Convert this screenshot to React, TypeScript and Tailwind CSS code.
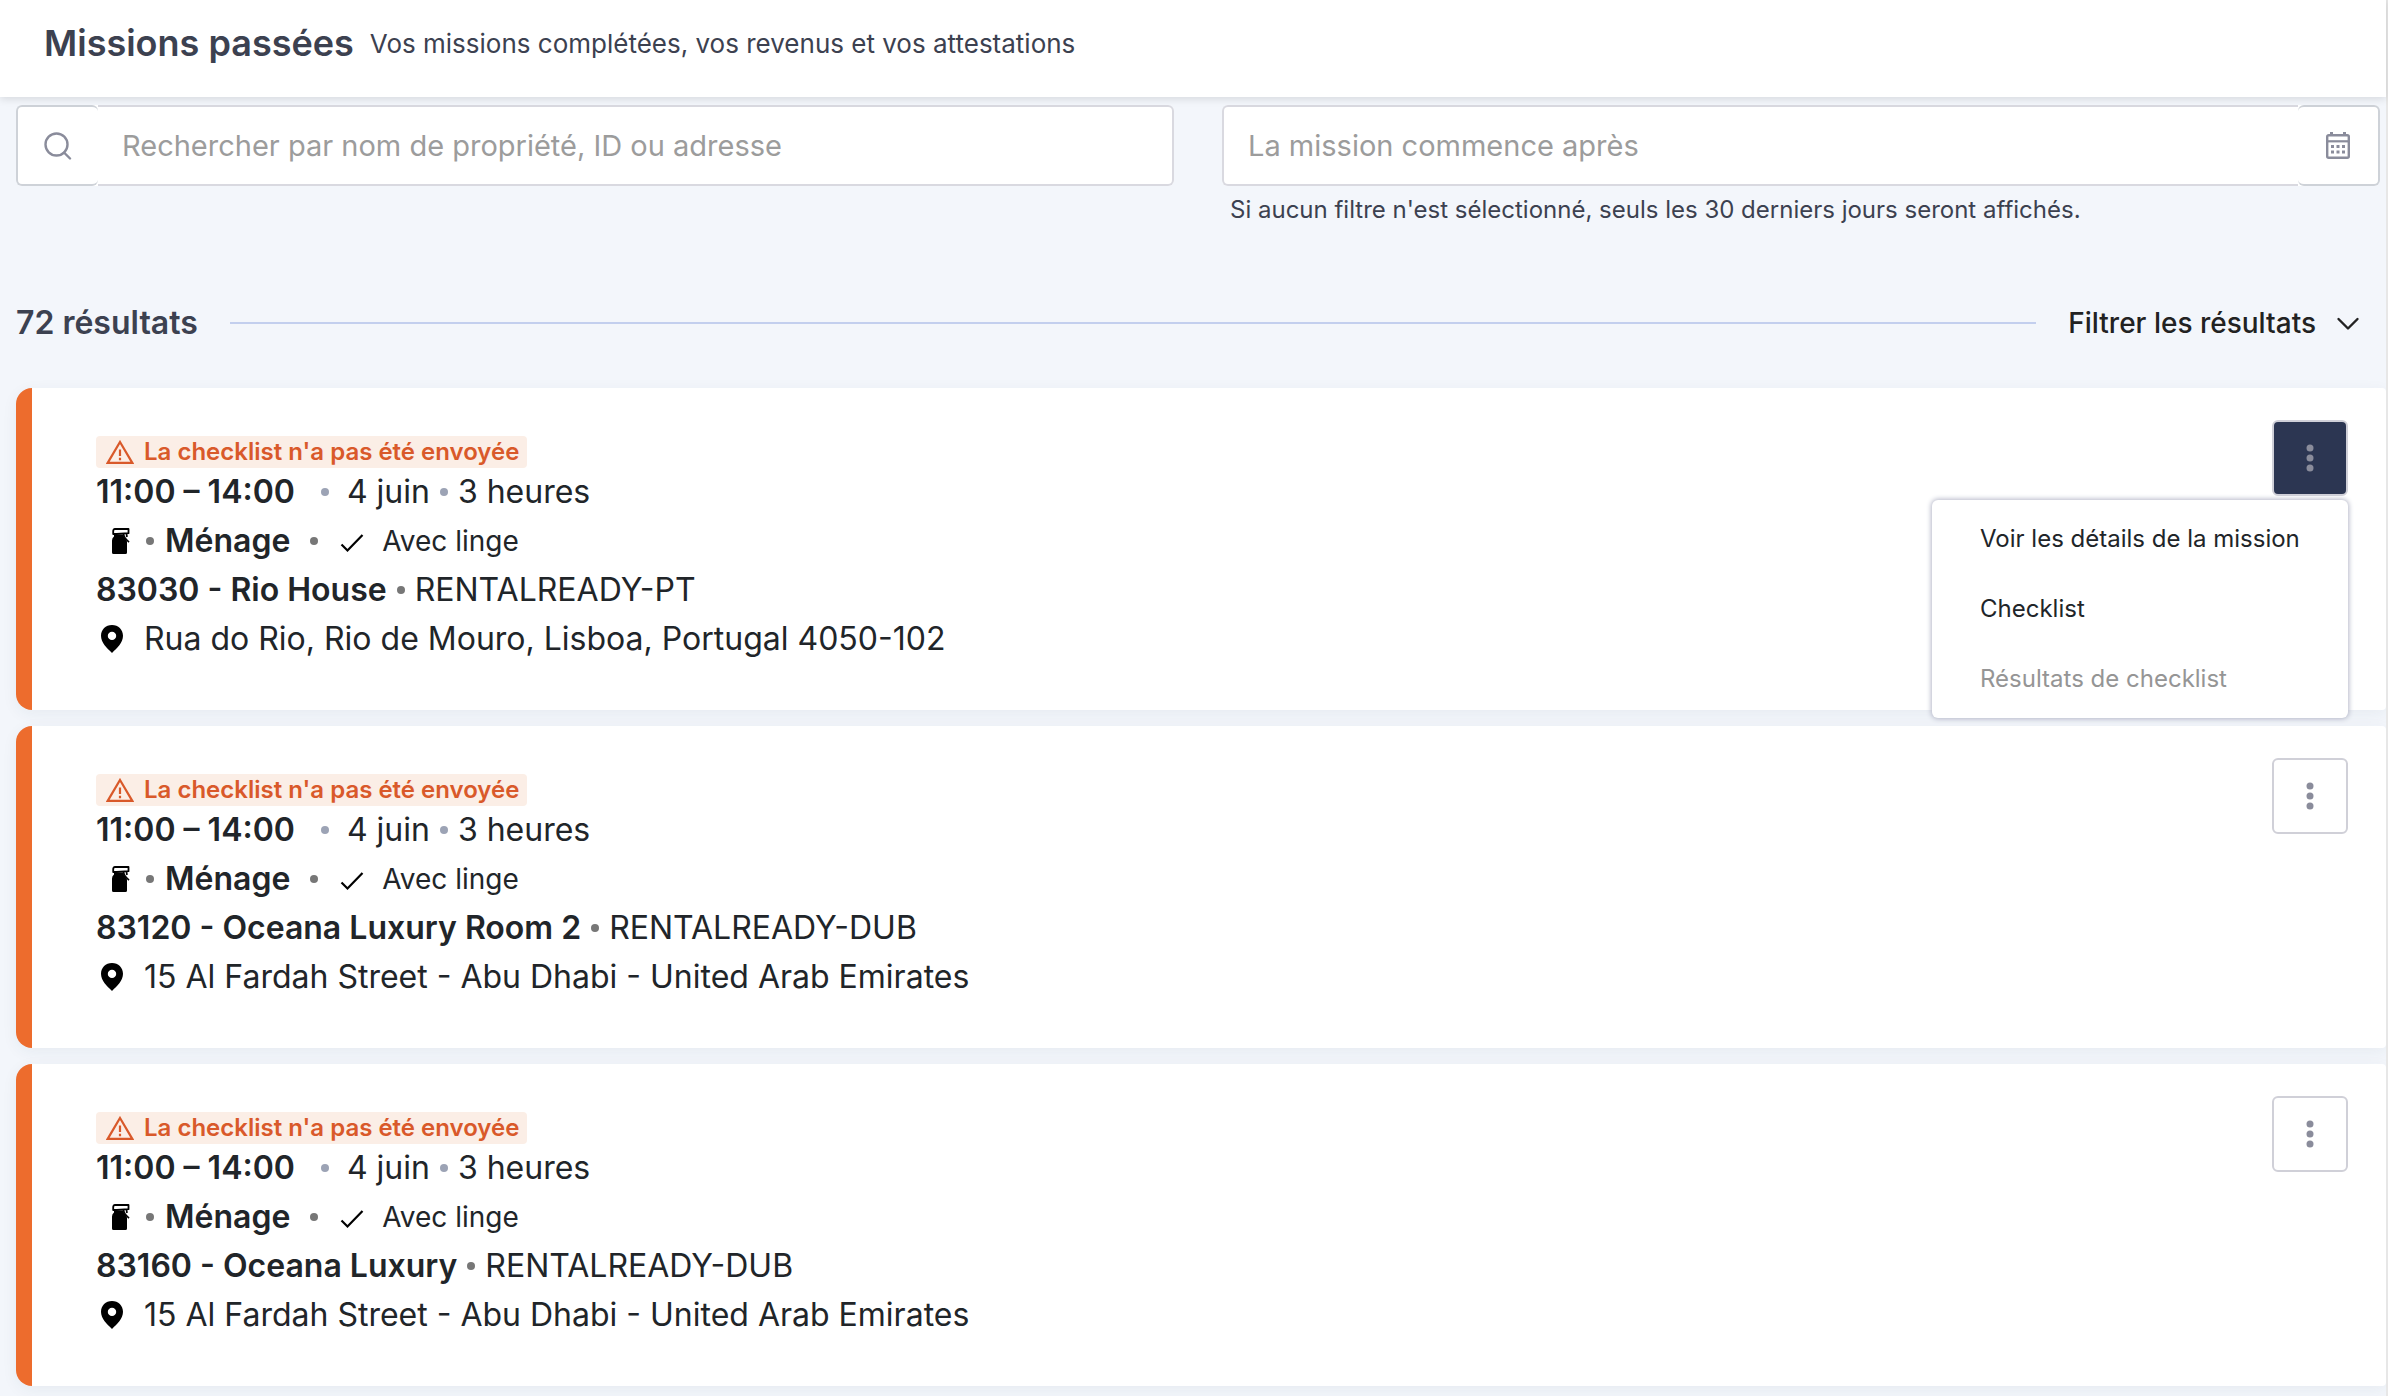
import React, { useState } from "react";

type Mission = {
  id: number;
  name: string;
  agency: string;
  address: string;
};

const missions: Mission[] = [
  {
    id: 83030,
    name: "Rio House",
    agency: "RENTALREADY-PT",
    address: "Rua do Rio, Rio de Mouro, Lisboa, Portugal 4050-102",
  },
  {
    id: 83120,
    name: "Oceana Luxury Room 2",
    agency: "RENTALREADY-DUB",
    address: "15 Al Fardah Street - Abu Dhabi - United Arab Emirates",
  },
  {
    id: 83160,
    name: "Oceana Luxury",
    agency: "RENTALREADY-DUB",
    address: "15 Al Fardah Street - Abu Dhabi - United Arab Emirates",
  },
];

// Icons
const SearchIcon = () => (
  <svg className="w-7 h-7" viewBox="0 0 28 28" fill="none" stroke="#8a8c9b" strokeWidth="2.4">
    <circle cx="12.5" cy="12.5" r="11" />
    <path d="M20 20.5l6 6" strokeLinecap="round" />
  </svg>
);

const CalendarIcon = () => (
  <svg className="w-6 h-7" viewBox="0 0 24 28">
    <path d="M4 0h3v4H4zM17 0h3v4h-3z" fill="#8a8c9b" />
    <rect x="1.2" y="3.2" width="21.6" height="22.6" rx="1.5" fill="none" stroke="#8a8c9b" strokeWidth="2.4" />
    <path d="M1 9.3h22" stroke="#8a8c9b" strokeWidth="2.2" />
    <path
      d="M5 13h3v3H5zM10.5 13h3v3h-3zM16 13h3v3h-3zM5 18.500h3v3H5zM10.5 18.500h3v3h-3zM16 18.500h3v3h-3z"
      fill="#8a8c9b"
    />
  </svg>
);

const ChevronIcon = () => (
  <svg className="w-6 h-6" viewBox="0 0 24 24" fill="none" stroke="#222" strokeWidth="2.4">
    <path d="M2.500 8l9.500 9.500L21.500 8" strokeLinecap="round" strokeLinejoin="round" />
  </svg>
);

const WarningIcon = () => (
  <svg className="w-7 h-6" viewBox="0 0 28 24" fill="none" stroke="#d9592a" strokeWidth="2.2">
    <path d="M14 2L26.300 22.900H1.700z" />
    <path d="M14 9.500v6.500M14 17.800v2.400" />
  </svg>
);

const SprayIcon = () => (
  <svg className="w-[18px] h-[26px]" viewBox="0 0 18 26">
    <path
      d="M3 1h13.500v4.200L4.500 6 1.200 6V3Q1.200 1 3 1z"
      fill="none"
      stroke="#000"
      strokeWidth="1.800"
      strokeLinejoin="round"
    />
    <path d="M2 6.500h9.500c.200 2 .800 3 2 4.200 1 1 1.500 2 1.500 3.500v10.300q0 1.500-1.500 1.500h-12Q0 26 0 24.500V12.500q0-2.500 2-4z" />
    <path d="M11.500 6c.500 3.500 2.500 5.500 5.500 8.200M14.500 6l.5 3" fill="none" stroke="#000" strokeWidth="1.700" />
  </svg>
);

const CheckIcon = () => (
  <svg className="w-6 h-6" viewBox="0 0 24 24" fill="none" stroke="#000" strokeWidth="2.2">
    <path d="M1.500 15.500l6 6L22.500 6" />
  </svg>
);

const PinIcon = () => (
  <svg className="w-6 h-7" viewBox="0 0 24 28">
    <path
      fillRule="evenodd"
      d="M12 0C5.600 0 1 4.700 1 10.800 1 18 7 23 12 28c5-5 11-10 11-17.200C23 4.700 18.400 0 12 0zm0 6.700a4.200 4.200 0 1 1 0 8.400 4.200 4.200 0 0 1 0-8.400z"
    />
  </svg>
);

const DotsIcon = () => (
  <svg className="w-2 h-7" viewBox="0 0 8 28" fill="#8a8c9b">
    <circle cx="4" cy="4" r="3.500" />
    <circle cx="4" cy="14" r="3.500" />
    <circle cx="4" cy="24" r="3.500" />
  </svg>
);

const Bullet = ({ className }: { className: string }) => (
  <span className={`w-2 h-2 rounded-full shrink-0 ${className}`} />
);

const MissionMenu = () => (
  <div
    role="menu"
    className="absolute right-0 top-20 z-20 w-[416px] py-1 bg-white rounded-md shadow-[0_0_5px_1px_#b5b7c8] text-[24px] text-[#212529]"
  >
    <button role="menuitem" className="block w-full h-[70px] pl-12 text-left">
      Voir les détails de la mission
    </button>
    <button role="menuitem" className="block w-full h-[70px] pl-12 text-left">
      Checklist
    </button>
    <button role="menuitem" disabled className="block w-full h-[70px] pl-12 text-left text-[#959595]">
      Résultats de checklist
    </button>
  </div>
);

type CardProps = {
  mission: Mission;
  isOpen: boolean;
  onToggle: () => void;
};

const MissionCard: React.FC<CardProps> = ({ mission, isOpen, onToggle }) => {
  return (
    <article className="flex justify-between items-start pl-16 pr-[38px] pt-8 pb-[47px] bg-white border-l-16 border-[#ed6c2d] rounded-l-2xl rounded-r-sm shadow-[0_4px_16px_rgba(40,60,90,0.06)]">
      <div className="pt-4 flex flex-col items-start gap-px text-[32px] leading-[48px] text-[#212529]">
        <div className="-mb-px h-8 pl-[10px] pr-2 flex items-center gap-[10px] rounded-sm bg-[#fbeee6] text-[24px] font-semibold text-[#d9592a]">
          <WarningIcon />
          La checklist n'a pas été envoyée
        </div>
        <div className="flex items-center">
          <span className="font-semibold">11:00 – 14:00</span>
          <Bullet className="ml-[26px] mr-[18px] bg-[#9ca3b5]" />
          <span>4 juin</span>
          <Bullet className="mx-[10px] bg-[#9ca3b5]" />
          <span>3 heures</span>
        </div>
        <div className="flex items-center pl-4">
          <SprayIcon />
          <Bullet className="ml-4 mr-[11px] bg-[#777]" />
          <span className="font-semibold">Ménage</span>
          <Bullet className="ml-5 mr-[22px] bg-[#777]" />
          <CheckIcon />
          <span className="ml-[18px] text-[28px]">Avec linge</span>
        </div>
        <div className="flex items-center">
          <span className="font-semibold">
            {mission.id} - {mission.name}
          </span>
          <Bullet className="mx-[10px] bg-[#777]" />
          <span>{mission.agency}</span>
        </div>
        <div className="flex items-center gap-5 pl-1">
          <PinIcon />
          <span>{mission.address}</span>
        </div>
      </div>
      <div className="relative">
        <button
          aria-label="Actions"
          aria-expanded={isOpen}
          onClick={onToggle}
          className={`w-[76px] h-[76px] flex justify-center items-center border-2 border-[#d0d0d8] rounded-md ${
            isOpen ? "bg-[#2c3652]" : "bg-white"
          }`}
        >
          <DotsIcon />
        </button>
        {isOpen && <MissionMenu />}
      </div>
    </article>
  );
};

export default function App() {
  // States
  const [search, setSearch] = useState("");
  const [startDate, setStartDate] = useState("");
  const [openId, setOpenId] = useState<number | null>(83030);

  return (
    <div className="min-h-screen bg-[#f3f6fb] border-r-2 border-[#e7e7e7] font-['Inter',sans-serif] text-[#3c4150]">
      <header className="relative z-10 h-[97px] pl-11 pb-[11px] flex items-center gap-4 bg-white shadow-[0_2px_8px_rgba(0,0,0,0.12)]">
        <h1 className="text-[36px] font-semibold">Missions passées</h1>
        <p className="text-[26px]">Vos missions complétées, vos revenus et vos attestations</p>
      </header>
      <main className="pt-2 pl-4 overflow-x-clip">
        <div className="grid grid-cols-2 gap-12 items-start pr-[6px]">
          <div className="flex h-[81px] bg-white rounded-md">
            <button
              aria-label="Rechercher"
              className="w-[82px] shrink-0 flex justify-center items-center border-2 border-r-0 border-[#ced2d8] rounded-md"
            >
              <SearchIcon />
            </button>
            <input
              type="text"
              aria-label="Rechercher une mission"
              placeholder="Rechercher par nom de propriété, ID ou adresse"
              value={search}
              onChange={(e) => setSearch(e.target.value)}
              className="flex-1 min-w-0 pl-6 text-[29px] border-2 border-l-0 border-[#d9d9e0] rounded-r-md outline-none placeholder:text-[#9c9c9c]"
            />
          </div>
          <div>
            <div className="flex h-[81px] bg-white rounded-md">
              <input
                type="text"
                id="start-date"
                aria-label="La mission commence après"
                placeholder="La mission commence après"
                value={startDate}
                onChange={(e) => setStartDate(e.target.value)}
                className="flex-1 min-w-0 pl-6 text-[29px] border-2 border-r-0 border-[#d9d9e0] rounded-l-md outline-none placeholder:text-[#9c9c9c]"
              />
              <button
                aria-label="Ouvrir le calendrier"
                className="w-[82px] shrink-0 flex justify-center items-center border-2 border-l-0 border-[#ced2d8] rounded-md"
              >
                <CalendarIcon />
              </button>
            </div>
            <label htmlFor="start-date" className="block pl-2 pt-1 text-[24px] leading-10">
              Si aucun filtre n'est sélectionné, seuls les 30 derniers jours seront affichés.
            </label>
          </div>
        </div>
        <div className="mt-[69px] mb-[41px] h-12 pr-[26px] flex items-center">
          <h2 className="text-[32px] font-semibold">72 résultats</h2>
          <hr className="flex-1 mx-8 border-t-2 border-[#c3cfee]" />
          <button className="flex items-center gap-5 text-[28px] font-medium text-[#222]">
            Filtrer les résultats
            <ChevronIcon />
          </button>
        </div>
        <section className="flex flex-col gap-4 pb-4">
          {missions.map((mission) => (
            <MissionCard
              key={mission.id}
              mission={mission}
              isOpen={openId === mission.id}
              onToggle={() => setOpenId(openId === mission.id ? null : mission.id)}
            />
          ))}
        </section>
      </main>
    </div>
  );
}
